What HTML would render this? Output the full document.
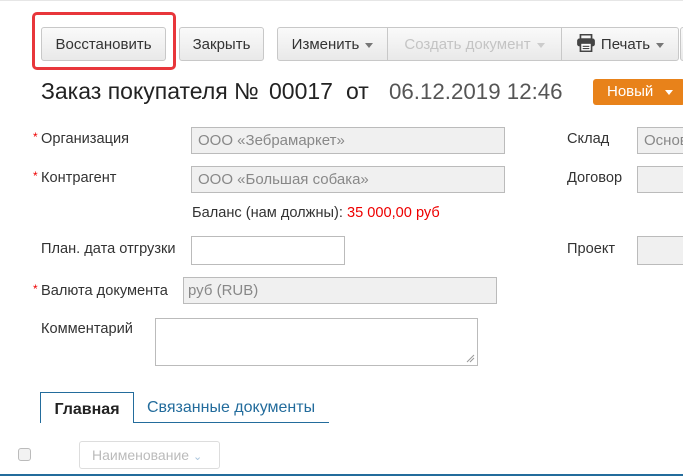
<!DOCTYPE html>
<html><head><meta charset="utf-8"><style>
body{margin:0;width:683px;height:476px;background:#fff;overflow:hidden;position:relative;font-family:"Liberation Sans",Arial,sans-serif;color:#333;}
.a{position:absolute;white-space:nowrap;}
.btn{position:absolute;height:34px;border:1px solid #c8c8c8;border-radius:3px;background:linear-gradient(#fafafa,#e9e9e9);font-size:15px;line-height:34px;text-align:center;box-sizing:border-box;color:#333;white-space:nowrap;}
.car{display:inline-block;width:0;height:0;border-left:4px solid transparent;border-right:4px solid transparent;border-top:5px solid #777;vertical-align:middle;margin-left:6px;}
.lbl{position:absolute;font-size:14.6px;white-space:nowrap;}
.req{color:#e00;font-size:12px;position:absolute;margin-left:-8px;margin-top:-1px;}
.inp{position:absolute;border:1px solid #bbb;background:#f0f0f0;box-sizing:border-box;height:27px;font-size:15px;color:#888;line-height:25px;padding-left:6px;white-space:nowrap;overflow:hidden;}
</style></head><body>
<div class="a" style="left:0;top:0;width:683px;height:1px;background:#e6e6e6"></div>
<div class="a" style="left:32px;top:12px;width:144px;height:58px;border:3px solid #e8363b;border-radius:5px;box-sizing:border-box"></div>
<div class="btn" style="left:41px;top:27px;width:125px">Восстановить</div>
<div class="btn" style="left:179px;top:27px;width:85px">Закрыть</div>
<div class="btn" style="left:277px;top:27px;width:111px;border-radius:3px 0 0 3px">Изменить<span class="car"></span></div>
<div class="btn" style="left:387px;top:27px;width:175px;border-radius:0;color:#c4c4c4">Создать документ<span class="car" style="border-top-color:#ccc"></span></div>
<div class="btn" style="left:561px;top:27px;width:118px;border-radius:0 3px 3px 0"><svg width="20" height="18" viewBox="0 0 18 16" style="vertical-align:-3px;margin-right:5px"><rect x="4" y="0.5" width="10" height="4" fill="none" stroke="#444" stroke-width="1.5"/><rect x="1" y="4" width="16" height="7" rx="2" fill="#444"/><rect x="4" y="8" width="10" height="7.5" fill="#fff" stroke="#444" stroke-width="1.5"/><line x1="6" y1="11" x2="12" y2="11" stroke="#444"/><line x1="6" y1="13" x2="12" y2="13" stroke="#444"/></svg>Печать<span class="car"></span></div>
<div class="btn" style="left:680px;top:27px;width:20px"></div>
<div class="a" style="left:41px;top:78px;font-size:23px;color:#222">Заказ покупателя №</div>
<div class="a" style="left:269px;top:78px;font-size:23px;color:#222">00017</div>
<div class="a" style="left:346px;top:78px;font-size:23px;color:#222">от</div>
<div class="a" style="left:389px;top:79px;font-size:22.3px;color:#555">06.12.2019 12:46</div>
<div class="a" style="left:593px;top:79px;width:92px;height:26px;background:#e8821a;border-radius:3px;color:#fff;font-size:15px;line-height:26px;padding-left:14px;box-sizing:border-box">Новый<span class="car" style="border-top-color:#fff;margin-left:12px"></span></div>

<div class="lbl" style="left:41px;top:131px"><span class="req">*</span>Организация</div>
<div class="inp" style="left:191px;top:127px;width:314px">ООО «Зебрамаркет»</div>
<div class="lbl" style="left:567px;top:131px">Склад</div>
<div class="inp" style="left:637px;top:127px;width:60px">Основ</div>

<div class="lbl" style="left:41px;top:170px"><span class="req">*</span>Контрагент</div>
<div class="inp" style="left:191px;top:166px;width:314px">ООО «Большая собака»</div>
<div class="lbl" style="left:567px;top:170px">Договор</div>
<div class="inp" style="left:637px;top:166px;width:60px"></div>

<div class="lbl" style="left:192px;top:205px">Баланс (нам должны): <span style="color:#e00">35 000,00 руб</span></div>

<div class="lbl" style="left:41px;top:241px">План. дата отгрузки</div>
<div class="inp" style="left:191px;top:236px;width:154px;height:29px;background:#fff"></div>
<div class="lbl" style="left:567px;top:241px">Проект</div>
<div class="inp" style="left:637px;top:236px;width:60px;height:29px"></div>

<div class="lbl" style="left:41px;top:283px"><span class="req">*</span>Валюта документа</div>
<div class="inp" style="left:183px;top:277px;width:314px;padding-left:4px">руб (RUB)</div>

<div class="lbl" style="left:41px;top:321px">Комментарий</div>
<div class="inp" style="left:155px;top:318px;width:323px;height:48px;background:#fff"><svg width="9" height="9" style="position:absolute;right:2px;bottom:2px"><path d="M1 8L8 1M4 8L8 4" stroke="#999"/></svg></div>

<div class="a" style="left:40px;top:392px;width:94px;height:31px;border:1px solid #236c9c;border-bottom:none;box-sizing:border-box;background:#fff;font-weight:bold;font-size:16px;line-height:33px;text-align:center;color:#222;z-index:2">Главная</div>
<div class="a" style="left:40px;top:422px;width:289px;height:1px;background:#236c9c"></div>
<div class="a" style="left:147px;top:399px;font-size:16px;color:#236c9c">Связанные документы</div>

<div class="a" style="left:18px;top:448px;width:13px;height:13px;border:1px solid #bbb;border-radius:3px;background:#f2f2f2;box-sizing:border-box"></div>
<div class="a" style="left:79px;top:441px;width:141px;height:28px;border:1px solid #ddd;border-radius:3px;box-sizing:border-box;font-size:14px;color:#bbb;line-height:26px;padding-left:12px">Наименование <span style="color:#a8c4dc;font-size:11px">⌄</span></div>
<div class="a" style="left:0;top:474px;width:683px;height:2px;background:#236c9c"></div>
</body></html>
